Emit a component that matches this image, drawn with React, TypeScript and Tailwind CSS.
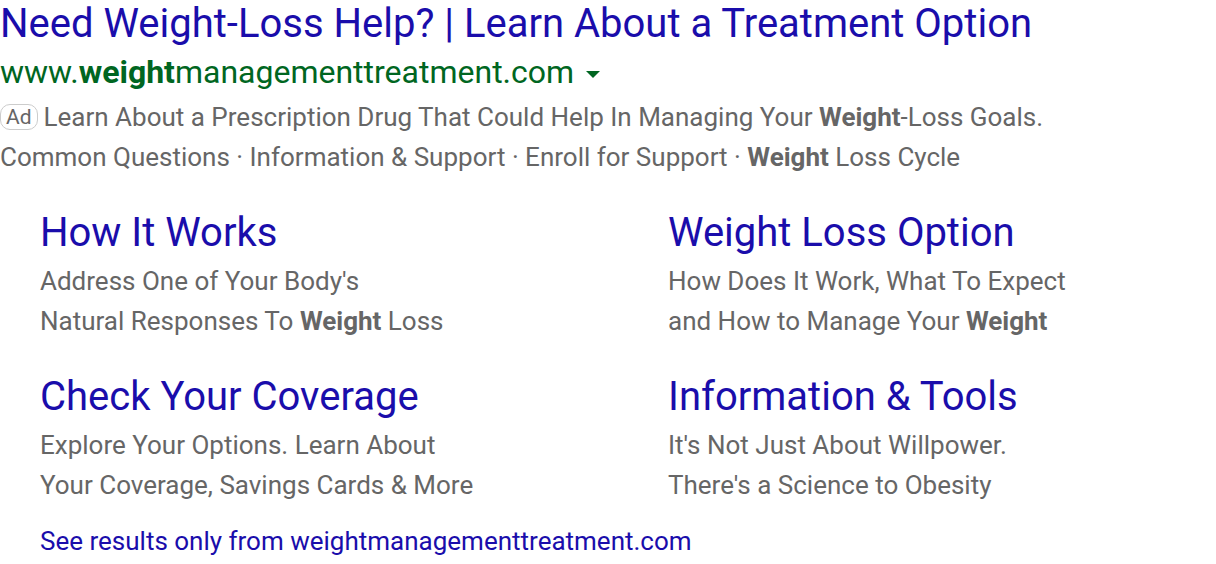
import React from "react";

const sitelinks = [
  {
    title: "How It Works",
    lines: [
      <>Address One of Your Body's</>,
      <>
        Natural Responses To <b className="font-bold">Weight</b> Loss
      </>,
    ],
  },
  {
    title: "Weight Loss Option",
    lines: [
      <>How Does It Work, What To Expect</>,
      <>
        and How to Manage Your <b className="font-bold">Weight</b>
      </>,
    ],
  },
  {
    title: "Check Your Coverage",
    lines: [<>Explore Your Options. Learn About</>, <>Your Coverage, Savings Cards &amp; More</>],
  },
  {
    title: "Information & Tools",
    lines: [<>It's Not Just About Willpower.</>, <>There's a Science to Obesity</>],
  },
];

export default function App() {
  return (
    <div className="min-h-screen bg-white font-['Roboto',sans-serif] text-[#666666]">
      {/* Headline + url */}
      <a href="#" className="block text-[40px] leading-[48px] text-[#1a0dab]">
        Need Weight-Loss Help? | Learn About a Treatment Option
      </a>
      <div className="flex items-center text-[32px] leading-[49px] text-[#006621]">
        <span>
          www.<b className="font-bold">weight</b>managementtreatment.com
        </span>
        <span className="ml-[12px] mt-1 h-0 w-0 border-x-[7px] border-t-[7px] border-x-transparent border-t-[#006621]" />
      </div>

      {/* Description */}
      <div className="text-[26px] leading-[40px]">
        <div className="flex items-center">
          <span className="mr-[6px] rounded-[10px] border border-[#cccccc] px-[5px] text-[21px] leading-[24px] text-[#666666]">
            Ad
          </span>
          <span>
            Learn About a Prescription Drug That Could Help In Managing Your{" "}
            <b className="font-bold">Weight</b>-Loss Goals.
          </span>
        </div>
        <div>
          Common Questions · Information &amp; Support · Enroll for Support ·{" "}
          <b className="font-bold">Weight</b> Loss Cycle
        </div>
      </div>

      {/* Sitelinks */}
      <div className="mt-[28px] grid grid-cols-[628px_1fr] gap-y-[28px] pl-[40px]">
        {sitelinks.map((s) => (
          <div key={s.title}>
            <a href="#" className="block text-[40px] leading-[56px] text-[#1a0dab]">
              {s.title}
            </a>
            <div className="text-[26px] leading-[40px]">
              {s.lines.map((l, i) => (
                <div key={i}>{l}</div>
              ))}
            </div>
          </div>
        ))}
      </div>

      <a href="#" className="mt-[18px] block pl-[40px] text-[26px] leading-[36px] text-[#1a0dab]">
        See results only from weightmanagementtreatment.com
      </a>
    </div>
  );
}
